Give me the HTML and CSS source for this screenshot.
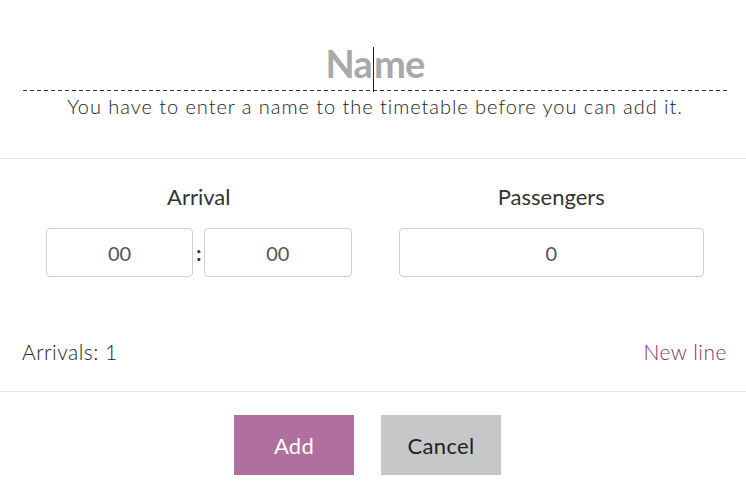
FILE: index.html
```
<!DOCTYPE html>
<html>
<head>
<meta charset="utf-8">
<link rel="stylesheet" href="styles.css">
</head>
<body>
<div class="dialog">
  <div class="header">
    <div class="name-field"><span class="name-text">Na<span class="caret"></span>me</span></div>
    <div class="hint">You have to enter a name to the timetable before you can add it.</div>
  </div>
  <div class="body">
    <div class="cols">
      <div class="col">
        <div class="label">Arrival</div>
        <div class="time">
          <div class="input">00</div>
          <div class="colon">:</div>
          <div class="input">00</div>
        </div>
      </div>
      <div class="col">
        <div class="label">Passengers</div>
        <div class="input">0</div>
      </div>
    </div>
    <div class="summary">
      <span class="count">Arrivals: 1</span>
      <span class="newline">New line</span>
    </div>
  </div>
  <div class="footer">
    <div class="btn btn-add">Add</div>
    <div class="btn btn-cancel">Cancel</div>
  </div>
</div>
</body>
</html>
```
FILE: styles.css
```
html, body {
  margin: 0;
  padding: 0;
  background: #fff;
}
body {
  font-family: Lato, "Noto Sans", sans-serif;
  color: #333;
}
.dialog {
  width: 746px;
}
.header {
  height: 159px;
  box-sizing: border-box;
  border-bottom: 1px solid #e6e6e6;
  padding: 38px 19px 0 23px;
}
.name-field {
  text-align: center;
  height: 53px;
  box-sizing: border-box;
  background-image: linear-gradient(to right, #333 4px, transparent 4px);
  background-size: 7px 1px;
  background-repeat: repeat-x;
  background-position: 0 bottom;
}
.name-text {
  font-size: 38px;
  font-weight: 700;
  color: #a9a9a9;
  line-height: 50px;
  letter-spacing: -0.8px;
}
.caret {
  display: inline-block;
  width: 1px;
  height: 45px;
  background: #222;
  vertical-align: -14px;
  margin-left: 1px;
}
.hint {
  text-align: center;
  font-size: 20px;
  font-weight: 300;
  letter-spacing: 0.95px;
  line-height: 30px;
  color: #222;
}
.body {
  height: 233px;
  box-sizing: border-box;
  border-bottom: 1px solid #e6e6e6;
  padding: 22px 19px 0 22px;
}
.cols {
  display: grid;
  grid-template-columns: 1fr 1fr;
}
.col {
  padding: 0 23px 0 24px;
  display: flex;
  flex-direction: column;
  align-items: stretch;
}
.label {
  text-align: center;
  font-size: 22px;
  line-height: 32px;
  color: #333;
  margin-bottom: 15px;
}
.time {
  display: flex;
  align-items: center;
}
.time .input {
  flex: 1;
}
.colon {
  width: 11px;
  text-align: center;
  font-size: 20px;
  font-weight: 700;
  line-height: 20px;
}
.input {
  height: 49px;
  box-sizing: border-box;
  border: 1px solid #cfcfcf;
  border-radius: 4px;
  display: flex;
  align-items: center;
  justify-content: center;
  font-size: 20px;
  color: #555;
}
.summary {
  margin-top: 60px;
  display: flex;
  justify-content: space-between;
  font-size: 21px;
  font-weight: 300;
  letter-spacing: 0.5px;
  line-height: 30px;
}
.count {
  color: #222;
}
.newline {
  color: #84306b;
}
.footer {
  display: flex;
  justify-content: center;
  gap: 27px;
  padding: 23px 11px 0 0;
}
.btn {
  width: 120px;
  height: 60px;
  display: flex;
  align-items: center;
  justify-content: center;
  font-size: 22px;
  letter-spacing: 0.3px;
}
.btn-add {
  background: #b06f9e;
  color: #fff;
}
.btn-cancel {
  background: #c6c7c9;
  color: #222;
}
```
